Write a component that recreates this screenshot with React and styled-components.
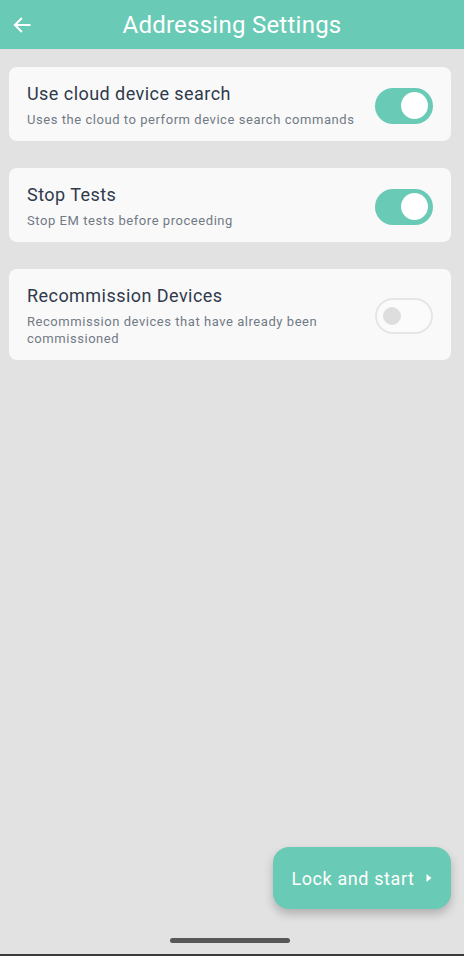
import React, { useState } from "react";
import styled, { createGlobalStyle } from "styled-components";

const GlobalStyle = createGlobalStyle`
  html, body {
    margin: 0;
    padding: 0;
    background: #e2e2e2;
    font-family: Roboto, "Noto Sans", sans-serif;
  }
  * { box-sizing: border-box; }
`;

const Screen = styled.div`
  width: 464px;
  height: 956px;
  display: flex;
  flex-direction: column;
  background: #e2e2e2;
  border-bottom: 2px solid #3a3a3a;
  overflow: hidden;
`;

const Header = styled.header`
  height: 49px;
  flex-shrink: 0;
  background: #69cab5;
  display: grid;
  grid-template-columns: 48px 1fr 48px;
  align-items: center;
`;

const BackButton = styled.button`
  border: none;
  background: none;
  padding: 0 0 0 12px;
  height: 100%;
  display: flex;
  align-items: center;
  cursor: pointer;
`;

const Title = styled.h1`
  margin: 0;
  text-align: center;
  color: #fff;
  font-size: 24px;
  font-weight: 400;
  letter-spacing: 0.25px;
`;

const Content = styled.main`
  flex: 1;
  display: flex;
  flex-direction: column;
  gap: 27px;
  padding: 18px 13px 0 9px;
`;

const Card = styled.section`
  background: #f9f9f9;
  border-radius: 8px;
  padding: ${(p) => (p.$tall ? "16px 18px 13px" : "15px 18px 12px")};
  display: flex;
  align-items: center;
  justify-content: space-between;
  gap: 16px;
  min-height: ${(p) => (p.$tall ? "91px" : "74px")};
`;

const TextBlock = styled.div`
  display: flex;
  flex-direction: column;
  gap: 6px;
  max-width: 340px;
`;

const CardTitle = styled.div`
  font-size: 18px;
  color: #2f3a4c;
  letter-spacing: 0.45px;
  line-height: 22px;
`;

const CardText = styled.div`
  font-size: 13px;
  color: #727a86;
  line-height: 17px;
  letter-spacing: 0.55px;
`;

const Track = styled.button`
  width: 58px;
  height: 36px;
  flex-shrink: 0;
  border-radius: 18px;
  border: ${(p) => (p.$on ? "none" : "2px solid #e6e6e6")};
  background: ${(p) => (p.$on ? "#69cab5" : "#fbfbfb")};
  display: flex;
  align-items: center;
  justify-content: ${(p) => (p.$on ? "flex-end" : "flex-start")};
  padding: ${(p) => (p.$on ? "0 5px" : "0 6px")};
  cursor: pointer;
`;

const Thumb = styled.span`
  width: ${(p) => (p.$on ? "27px" : "18px")};
  height: ${(p) => (p.$on ? "27px" : "18px")};
  border-radius: 50%;
  background: ${(p) => (p.$on ? "#ffffff" : "#dedede")};
`;

const Footer = styled.footer`
  display: flex;
  flex-direction: column;
  align-items: center;
`;

const StartButton = styled.button`
  align-self: flex-end;
  margin-right: 13px;
  width: 178px;
  height: 62px;
  border: none;
  border-radius: 16px;
  background: #69cab5;
  color: #fff;
  font-family: Roboto, "Noto Sans", sans-serif;
  font-size: 18px;
  letter-spacing: 0.6px;
  display: flex;
  align-items: center;
  justify-content: center;
  gap: 10px;
  box-shadow: 0 5px 10px rgba(0, 0, 0, 0.22);
  cursor: pointer;
  padding: 0;
`;

const HomeBar = styled.div`
  width: 120px;
  height: 5px;
  border-radius: 3px;
  background: #575757;
  margin: 29px 4px 11px 0;
`;

const Toggle = ({ on, onClick }) => (
  <Track $on={on} onClick={onClick}>
    <Thumb $on={on} />
  </Track>
);

const settings = [
  {
    id: "cloud",
    title: "Use cloud device search",
    text: "Uses the cloud to perform device search commands",
    on: true,
  },
  {
    id: "stop",
    title: "Stop Tests",
    text: "Stop EM tests before proceeding",
    on: true,
  },
  {
    id: "recommission",
    title: "Recommission Devices",
    text: "Recommission devices that have already been commissioned",
    on: false,
    tall: true,
  },
];

export default function App() {
  const [values, setValues] = useState(
    Object.fromEntries(settings.map((s) => [s.id, s.on]))
  );

  return (
    <Screen>
      <GlobalStyle />
      <Header>
        <BackButton aria-label="Back">
          <svg width="20" height="20" viewBox="0 0 24 24" fill="none" stroke="#fff" strokeWidth="2.4" strokeLinecap="square">
            <path d="M21 12H4" />
            <path d="M11 4.5L3.5 12L11 19.5" />
          </svg>
        </BackButton>
        <Title>Addressing Settings</Title>
        <span />
      </Header>
      <Content>
        {settings.map((s) => (
          <Card key={s.id} $tall={s.tall}>
            <TextBlock>
              <CardTitle>{s.title}</CardTitle>
              <CardText>{s.text}</CardText>
            </TextBlock>
            <Toggle
              on={values[s.id]}
              onClick={() => setValues((v) => ({ ...v, [s.id]: !v[s.id] }))}
            />
          </Card>
        ))}
      </Content>
      <Footer>
        <StartButton>
          Lock and start
          <svg width="8" height="10" viewBox="0 0 8 10">
            <path d="M1.5 1L6.5 5L1.5 9Z" fill="#fff" />
          </svg>
        </StartButton>
        <HomeBar />
      </Footer>
    </Screen>
  );
}
